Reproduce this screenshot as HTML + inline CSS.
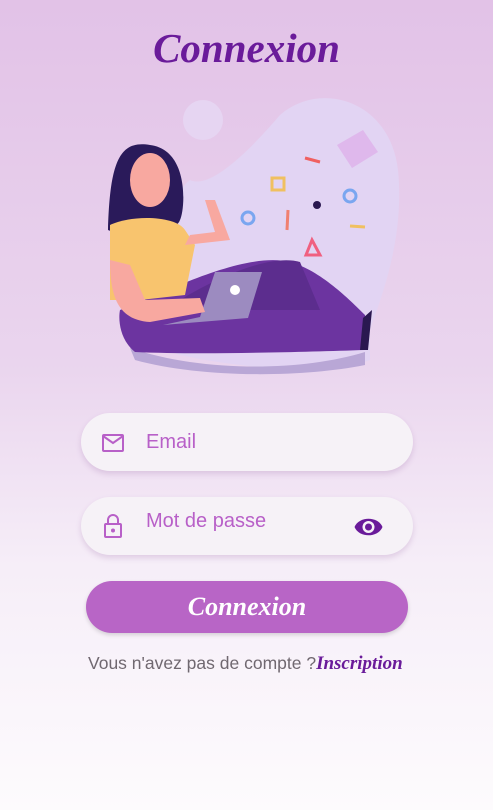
<!DOCTYPE html>
<html><head><meta charset="utf-8"><style>
*{margin:0;padding:0;box-sizing:border-box}
body{width:493px;height:810px;overflow:hidden;background:linear-gradient(180deg,#e2c2e7 0%,#ead5ee 45%,#f6eef8 70%,#fdfbfd 100%);font-family:"Liberation Sans",sans-serif;position:relative}
.t{position:absolute;top:24px;left:0;width:493px;text-align:center;font-family:"Liberation Serif",serif;font-style:italic;font-weight:bold;font-size:41px;color:#6a1b9a}
.f{position:absolute;left:81px;width:332px;height:58px;border-radius:29px;background:#f6f2f7;box-shadow:0 3px 6px rgba(120,60,140,.18)}
.f span{position:absolute;left:65px;font-size:20px;color:#b860c8}
.btn{position:absolute;left:86px;top:581px;width:322px;height:52px;border-radius:26px;background:#b865c6;box-shadow:0 2px 4px rgba(0,0,0,.15);text-align:center;line-height:52px;font-family:"Liberation Serif",serif;font-style:italic;font-weight:bold;font-size:26px;color:#fff}
.l{position:absolute;top:653px;left:88px;font-size:17.5px;color:#706870;white-space:nowrap}
.l b{font-family:"Liberation Serif",serif;font-style:italic;color:#6a1b9a;font-size:19px}
</style></head><body>
<div class="t">Connexion</div>
<svg style="position:absolute;left:0;top:0" width="493" height="400">
<circle cx="203" cy="120" r="20" fill="#e6d5f2"/>
<path d="M190 180 C210 190 250 150 280 115 C320 80 390 100 398 170 C405 240 380 300 370 330 L370 360 C330 375 250 370 180 355 C140 345 160 200 190 180Z" fill="#e2d4f3"/>
<path d="M130 348 C200 372 300 372 365 352 L365 365 C300 378 200 378 135 360Z" fill="#b9a7d6"/>
<path d="M120 310 C150 300 240 250 290 262 C320 270 350 300 365 315 L365 350 C300 352 200 355 135 352 C120 340 118 320 120 310Z" fill="#6c34a0"/>
<path d="M363 318 L372 310 L368 350 L360 350Z" fill="#2a1850"/>
<path d="M180 300 C230 270 275 255 300 262 L320 310 L230 310Z" fill="#5c2d8e"/>
<path d="M163 325 L248 318 L262 272 L215 272 L200 317Z" fill="#9c8bc0"/>
<circle cx="235" cy="290" r="5" fill="#fff"/>
<path d="M108 230 C110 160 120 140 150 145 C190 150 185 210 180 220 C175 235 130 240 108 230Z" fill="#2a1a5a"/>
<ellipse cx="150" cy="180" rx="20" ry="27" fill="#f8a8a0"/>
<path d="M110 225 C130 215 175 215 185 230 L195 245 L185 295 L140 300 L110 300Z" fill="#f8c46e"/>
<path d="M110 260 C110 300 120 320 150 322 L205 312 L200 298 L145 300 L130 265Z" fill="#f8a8a0"/>
<path d="M185 245 L230 240 L215 200 L205 200 L215 232 L190 235Z" fill="#f8a8a0"/>
<path d="M337 145 L363 130 L378 152 L352 168Z" fill="#dfb8ec"/>
<circle cx="248" cy="218" r="6" fill="none" stroke="#7aa6f0" stroke-width="3"/>
<circle cx="350" cy="196" r="6" fill="none" stroke="#7aa6f0" stroke-width="3"/>
<rect x="272" y="178" width="12" height="12" fill="none" stroke="#f0c060" stroke-width="3"/>
<path d="M312 240 L320 255 L306 255Z" fill="none" stroke="#f06080" stroke-width="3"/>
<circle cx="317" cy="205" r="4" fill="#2a1850"/>
<path d="M305 158 L320 162" stroke="#f06060" stroke-width="3"/>
<path d="M350 226 L365 227" stroke="#f0c060" stroke-width="3"/>
<path d="M288 210 L287 230" stroke="#f08070" stroke-width="3"/>
</svg>
<div class="f" style="top:413px">
<svg style="position:absolute;left:21px;top:21px" width="22" height="18" viewBox="0 0 22 18"><rect x="1" y="1" width="20" height="16" rx="1" fill="none" stroke="#b860c8" stroke-width="2"/><path d="M1 2 L11 9 L21 2" fill="none" stroke="#b860c8" stroke-width="2"/></svg>
<span style="top:18px">Email</span></div>
<div class="f" style="top:497px">
<svg style="position:absolute;left:23px;top:17px" width="18" height="24" viewBox="0 0 18 24"><path d="M4 10 V6 a5 5 0 0 1 10 0 V10" fill="none" stroke="#b860c8" stroke-width="2"/><rect x="1" y="10" width="16" height="13" rx="1" fill="none" stroke="#b860c8" stroke-width="2"/><circle cx="9" cy="16.5" r="2" fill="#b860c8"/></svg>
<span style="top:13px">Mot de passe</span>
<svg style="position:absolute;left:273px;top:20px" width="29" height="20" viewBox="0 0 29 20"><path d="M0.5 10 C5 -1 24 -1 28.5 10 C24 21 5 21 0.5 10Z" fill="#6a1b9a"/><circle cx="14.5" cy="10" r="6" fill="#f6f2f7"/><circle cx="14.5" cy="10" r="3.5" fill="#6a1b9a"/></svg>
</div>
<div class="btn">Connexion</div>
<div class="l">Vous n'avez pas de compte ?<b>Inscription</b></div>
</body></html>
